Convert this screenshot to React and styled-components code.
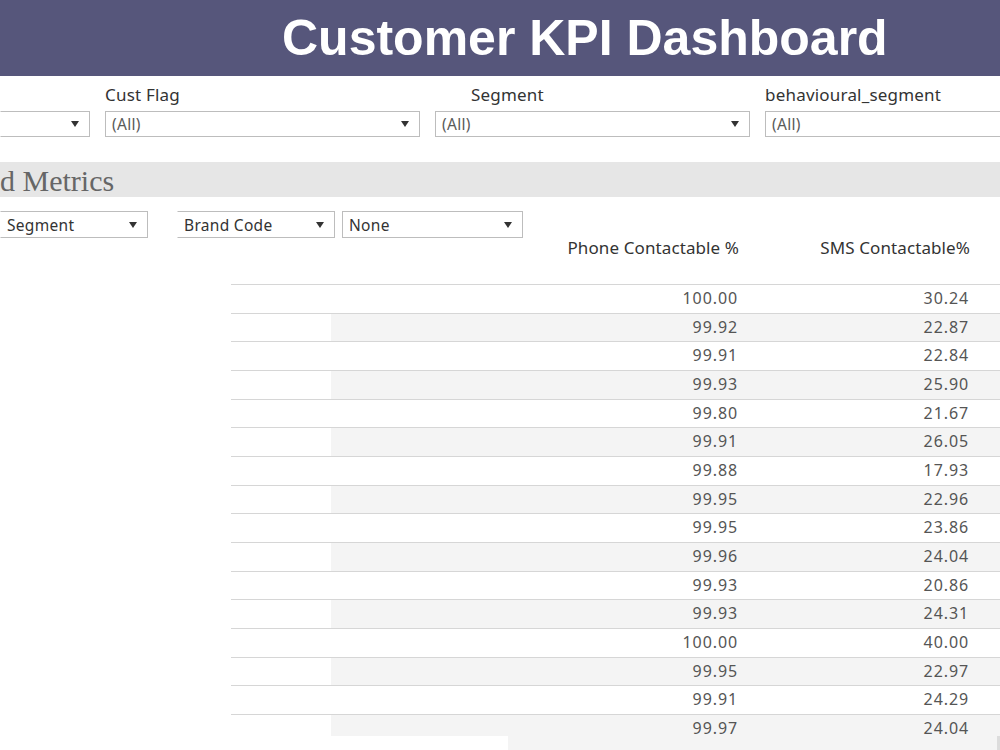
import React from 'react';
import styled, { createGlobalStyle } from 'styled-components';

const GlobalStyle = createGlobalStyle`
  html, body {
    margin: 0;
    padding: 0;
    background: #fff;
    overflow: hidden;
  }
  body {
    font-family: "Noto Sans", "Open Sans", sans-serif;
    color: #333;
  }
`

const Page = styled.div`
  width: 1000px;
  height: 750px;
  position: relative;
  overflow: hidden;
`

const Banner = styled.header`
  height: 76px;
  background: #56567b;
  padding-left: 282px;
  box-sizing: border-box;
`

const Title = styled.h1`
  margin: 0;
  font-family: "Liberation Sans", Arial, sans-serif;
  font-weight: 700;
  font-size: 50px;
  line-height: 76px;
  color: #fff;
  white-space: nowrap;
`

const FilterRow = styled.div`
  display: grid;
  grid-template-columns: 90px 315px 315px 315px;
  column-gap: 15px;
  padding-top: 6px;
`

const Filter = styled.div`
  display: flex;
  flex-direction: column;
  gap: 3px;
`

const FilterLabel = styled.div`
  height: 26px;
  line-height: 26px;
  font-size: 17px;
  letter-spacing: 0.2px;
  color: #333;
  padding-left: ${p => p.$indent || 0}px;
  white-space: nowrap;
`

const Select = styled.div`
  height: ${p => p.$h || 26}px;
  box-sizing: border-box;
  border: 1px solid #bdbdbd;
  border-left-color: ${p => (p.$open ? 'transparent' : '#bdbdbd')};
  background: #fff;
  display: flex;
  align-items: center;
  justify-content: space-between;
  padding: 0 10px 0 6px;
  font-size: 15.5px;
  letter-spacing: 0.3px;
  color: ${p => (p.$muted ? '#5a5a5a' : '#333')};
  white-space: nowrap;
  overflow: hidden;
`

const Caret = styled.span`
  width: 0;
  height: 0;
  border-left: 4.5px solid transparent;
  border-right: 4.5px solid transparent;
  border-top: 6px solid #333;
  flex-shrink: 0;
  margin-left: 8px;
`

const SectionBar = styled.div`
  margin-top: 25px;
  height: 35px;
  background: #e6e6e6;
  font-family: "Liberation Serif", "Times New Roman", serif;
  font-size: 30px;
  line-height: 37px;
  color: #666;
  white-space: nowrap;
`

const ControlsRow = styled.div`
  display: flex;
  margin-top: 14px;
  height: 27px;
`

const Control = styled.div`
  width: ${p => p.$w}px;
  margin-left: ${p => p.$gap || 0}px;
`

const Grid = styled.div`
  display: grid;
  grid-template-columns: 231px 100px 415px 231px 1fr;
`

const HeaderRow = styled(Grid)`
  height: 46px;
`

const HeadCell = styled.div`
  text-align: right;
  padding-right: 7px;
  font-size: 17px;
  letter-spacing: 0.1px;
  line-height: 20px;
  color: #333;
  white-space: nowrap;
`

const Row = styled(Grid)`
  height: 28.67px;
`

const Cell = styled.div`
  border-top: 1px solid #d6d6d6;
  background: ${p => (p.$shade ? '#f4f4f4' : '#fff')};
  text-align: right;
  padding-right: 8px;
  font-size: 16px;
  letter-spacing: 0.9px;
  line-height: 27px;
  color: #555;
`

const Blank = styled.div``

const ScrollTrack = styled.div`
  position: absolute;
  left: 331px;
  right: 0;
  bottom: 0;
  height: 14px;
  display: flex;
`

const TrackGap = styled.div`
  width: 177px;
  background: #fff;
`

const TrackFill = styled.div`
  flex: 1;
  background: #f4f4f4;
  border-right: 3px solid #dcdcdc;
`

const rows = [
  ['100.00', '30.24'], ['99.92', '22.87'], ['99.91', '22.84'], ['99.93', '25.90'],
  ['99.80', '21.67'], ['99.91', '26.05'], ['99.88', '17.93'], ['99.95', '22.96'],
  ['99.95', '23.86'], ['99.96', '24.04'], ['99.93', '20.86'], ['99.93', '24.31'],
  ['100.00', '40.00'], ['99.95', '22.97'], ['99.91', '24.29'], ['99.97', '24.04'],
]

export default function App() {
  return (
    <Page>
      <GlobalStyle />
      <Banner>
        <Title>Customer KPI Dashboard</Title>
      </Banner>

      <FilterRow>
        <Filter>
          <FilterLabel />
          <Select $open $muted><span /><Caret /></Select>
        </Filter>
        <Filter>
          <FilterLabel>Cust Flag</FilterLabel>
          <Select $muted><span>(All)</span><Caret /></Select>
        </Filter>
        <Filter>
          <FilterLabel $indent={36}>Segment</FilterLabel>
          <Select $muted><span>(All)</span><Caret /></Select>
        </Filter>
        <Filter>
          <FilterLabel>behavioural_segment</FilterLabel>
          <Select $muted><span>(All)</span></Select>
        </Filter>
      </FilterRow>

      <SectionBar>d Metrics</SectionBar>

      <ControlsRow>
        <Control $w={148}>
          <Select $h={27} $open><span>Segment</span><Caret /></Select>
        </Control>
        <Control $w={158} $gap={29}>
          <Select $h={27} $open><span>Brand Code</span><Caret /></Select>
        </Control>
        <Control $w={181} $gap={7}>
          <Select $h={27}><span>None</span><Caret /></Select>
        </Control>
      </ControlsRow>

      <HeaderRow>
        <Blank />
        <Blank />
        <HeadCell>Phone Contactable %</HeadCell>
        <HeadCell>SMS Contactable%</HeadCell>
        <Blank />
      </HeaderRow>

      {rows.map(([phone, sms], i) => (
        <Row key={i}>
          <Blank />
          <Cell />
          <Cell $shade={i % 2 === 1}>{phone}</Cell>
          <Cell $shade={i % 2 === 1}>{sms}</Cell>
          <Cell $shade={i % 2 === 1} />
        </Row>
      ))}

      <ScrollTrack>
        <TrackGap />
        <TrackFill />
      </ScrollTrack>
    </Page>
  )
}
